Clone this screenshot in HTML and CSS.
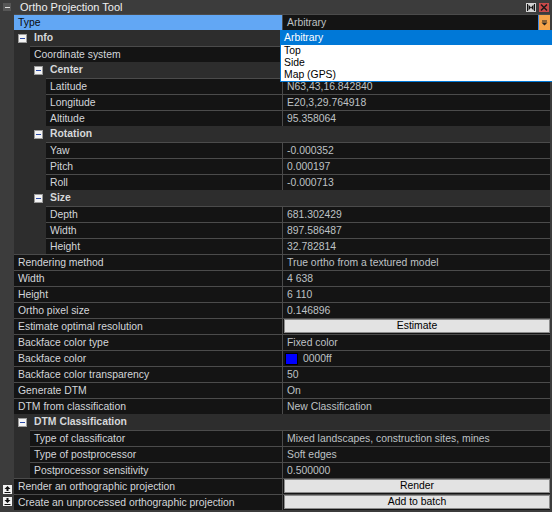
FILE: index.html
```html
<!DOCTYPE html>
<html>

<head>
  <title>Ortho Projection Tool</title>
  <link rel="stylesheet" href="styles.css">
</head>

<body>
  <div class="window">
    <div class="titlebar">
      <span class="tb-collapse"></span>
      <span class="title">Ortho Projection Tool</span>
      <span class="tb-btn tb-float">
        <svg width="10" height="9" viewBox="0 0 10 9"><path d="M1 1h1v7H1zM2.5 1.5L5 4.5 2.5 7.5zM8 1h1v7H8zM7.5 1.5L5 4.5 7.5 7.5z" fill="#111"/></svg>
      </span>
      <span class="tb-btn tb-close">
        <svg width="10" height="9" viewBox="0 0 10 9"><path d="M2 1.5l6 6M8 1.5l-6 6" stroke="#1a1a1a" stroke-width="1.6"/></svg>
      </span>
    </div>

    <div class="panel">
      <div class="gutter">
        <span class="side-icon">
          <svg width="9" height="9" viewBox="0 0 9 9"><rect width="9" height="9" fill="#f2f2f2"/><path d="M4.5 1L1.5 4h2v2h2V4h2zM1.5 7h6v1h-6z" fill="#111"/></svg>
        </span>
        <span class="side-icon">
          <svg width="9" height="9" viewBox="0 0 9 9"><rect width="9" height="9" fill="#f2f2f2"/><path d="M3.5 1h2v2h2l-3 3-3-3h2zM1.5 7h6v1h-6z" fill="#111"/></svg>
        </span>
      </div>

      <div class="grid">
        <div class="row">
          <div class="cell name selected">Type</div>
          <div class="cell value combo">
            <span>Arbitrary</span>
            <span class="combo-arrow">
              <svg width="7" height="6" viewBox="0 0 7 6"><path d="M1 0.5h5v1H1zM0.5 2.5h6L3.5 5.5z" fill="#222"/></svg>
            </span>
          </div>
        </div>

        <div class="row cat"><span class="toggle"></span>Info</div>
        <div class="row l1">
          <div class="cell name">Coordinate system</div>
          <div class="cell value"></div>
        </div>
        <div class="row cat l1"><span class="toggle"></span>Center</div>
        <div class="row l2">
          <div class="cell name">Latitude</div>
          <div class="cell value">N63,43,16.842840</div>
        </div>
        <div class="row l2">
          <div class="cell name">Longitude</div>
          <div class="cell value">E20,3,29.764918</div>
        </div>
        <div class="row l2">
          <div class="cell name">Altitude</div>
          <div class="cell value">95.358064</div>
        </div>
        <div class="row cat l1"><span class="toggle"></span>Rotation</div>
        <div class="row l2">
          <div class="cell name">Yaw</div>
          <div class="cell value">-0.000352</div>
        </div>
        <div class="row l2">
          <div class="cell name">Pitch</div>
          <div class="cell value">0.000197</div>
        </div>
        <div class="row l2">
          <div class="cell name">Roll</div>
          <div class="cell value">-0.000713</div>
        </div>
        <div class="row cat l1"><span class="toggle"></span>Size</div>
        <div class="row l2">
          <div class="cell name">Depth</div>
          <div class="cell value">681.302429</div>
        </div>
        <div class="row l2">
          <div class="cell name">Width</div>
          <div class="cell value">897.586487</div>
        </div>
        <div class="row l2">
          <div class="cell name">Height</div>
          <div class="cell value">32.782814</div>
        </div>

        <div class="row">
          <div class="cell name">Rendering method</div>
          <div class="cell value">True ortho from a textured model</div>
        </div>
        <div class="row">
          <div class="cell name">Width</div>
          <div class="cell value">4 638</div>
        </div>
        <div class="row">
          <div class="cell name">Height</div>
          <div class="cell value">6 110</div>
        </div>
        <div class="row">
          <div class="cell name">Ortho pixel size</div>
          <div class="cell value">0.146896</div>
        </div>
        <div class="row">
          <div class="cell name">Estimate optimal resolution</div>
          <div class="cell value action"><button>Estimate</button></div>
        </div>
        <div class="row">
          <div class="cell name">Backface color type</div>
          <div class="cell value">Fixed color</div>
        </div>
        <div class="row">
          <div class="cell name">Backface color</div>
          <div class="cell value color"><span class="swatch"></span>0000ff</div>
        </div>
        <div class="row">
          <div class="cell name">Backface color transparency</div>
          <div class="cell value">50</div>
        </div>
        <div class="row">
          <div class="cell name">Generate DTM</div>
          <div class="cell value">On</div>
        </div>
        <div class="row">
          <div class="cell name">DTM from classification</div>
          <div class="cell value">New Classification</div>
        </div>

        <div class="row cat"><span class="toggle"></span>DTM Classification</div>
        <div class="row l1">
          <div class="cell name">Type of classificator</div>
          <div class="cell value">Mixed landscapes, construction sites, mines</div>
        </div>
        <div class="row l1">
          <div class="cell name">Type of postprocessor</div>
          <div class="cell value">Soft edges</div>
        </div>
        <div class="row l1">
          <div class="cell name">Postprocessor sensitivity</div>
          <div class="cell value">0.500000</div>
        </div>

        <div class="row">
          <div class="cell name">Render an orthographic projection</div>
          <div class="cell value action"><button>Render</button></div>
        </div>
        <div class="row">
          <div class="cell name">Create an unprocessed orthographic projection</div>
          <div class="cell value action"><button>Add to batch</button></div>
        </div>
      </div>
    </div>

    <ul class="dropdown">
      <li class="active">Arbitrary</li>
      <li>Top</li>
      <li>Side</li>
      <li>Map (GPS)</li>
    </ul>
  </div>
</body>

</html>
```

FILE: styles.css
```css
body {
  margin: 0;
  background-color: #3c3c3c;
  font-family: "Liberation Sans", Arial, sans-serif;
  font-size: 10.4px;
}

.window {
  position: relative;
  width: 552px;
  height: 512px;
  background-color: #3c3c3c;
  overflow: hidden;
}

/* title bar */

.titlebar {
  display: flex;
  align-items: center;
  height: 14px;
}

.tb-collapse {
  position: relative;
  width: 8px;
  height: 8px;
  margin-left: 3px;
  background-color: #575757;
}

.tb-collapse::after {
  content: '';
  position: absolute;
  left: 2px;
  top: 4px;
  width: 5px;
  height: 1px;
  background-color: #e0e0e0;
}

.title {
  flex: 1;
  margin-left: 9px;
  color: #f0f0f0;
  font-size: 11px;
  line-height: 14px;
}

.tb-btn {
  display: flex;
  width: 10px;
  height: 9px;
  margin-top: 1px;
}

.tb-float {
  background-color: #d2d2d2;
  margin-right: 3px;
}

.tb-close {
  background-color: #c94a4a;
  margin-right: 3px;
}

/* main area */

.panel {
  display: flex;
}

.gutter {
  display: flex;
  flex-direction: column;
  justify-content: flex-end;
  gap: 3px;
  width: 14px;
  padding-bottom: 4px;
  box-sizing: border-box;
}

.side-icon {
  display: flex;
  margin-left: 3px;
}

.grid {
  width: 536px;
}

.row {
  display: flex;
  height: 16px;
  background-color: #2d2d2d;
  line-height: 15px;
}

.cell {
  box-sizing: border-box;
  border-top: 1px solid #4b4b4b;
  background-color: #141414;
  padding-left: 4px;
  white-space: nowrap;
  overflow: hidden;
}

.name {
  width: 268px;
  color: #d3d6da;
}

.l1 .name {
  margin-left: 16px;
  width: 252px;
}

.l2 .name {
  margin-left: 32px;
  width: 236px;
}

.value {
  flex: 1;
  border-left: 1px solid #4b4b4b;
  color: #bfc2c5;
}

.name.selected {
  background-color: #62a7f4;
  color: #0a0a0a;
}

/* categories */

.cat {
  align-items: center;
  padding-left: 4px;
  line-height: 16px;
  font-weight: bold;
  color: #d6d8da;
}

.cat.l1 {
  padding-left: 20px;
}

.toggle {
  position: relative;
  width: 9px;
  height: 9px;
  box-sizing: border-box;
  margin-right: 7px;
  border: 1px solid #9c9c9c;
  background-color: #f4f4f4;
}

.toggle::after {
  content: '';
  position: absolute;
  left: 1px;
  top: 3px;
  width: 5px;
  height: 1px;
  background-color: #2a4aa8;
}

/* value editors */

.combo {
  display: flex;
  padding-right: 0;
}

.combo span:first-child {
  flex: 1;
}

.combo-arrow {
  display: flex;
  align-items: center;
  justify-content: center;
  width: 11px;
  border-left: 1px solid #3c8ae8;
  background-color: #f5a44a;
}

.action {
  padding: 0 0 0 1px;
}

.action button {
  display: block;
  width: 100%;
  height: 14px;
  margin: 0;
  padding: 0;
  border: 1px solid #8c8c8c;
  background-color: #e3e3e3;
  color: #000;
  font-family: "Liberation Sans", Arial, sans-serif;
  font-size: 10.4px;
  line-height: 12px;
}

.color {
  display: flex;
  align-items: center;
  padding-left: 2px;
}

.swatch {
  width: 13px;
  height: 12px;
  box-sizing: border-box;
  margin-right: 5px;
  border: 1px solid #000;
  background-color: #0000ff;
}

/* open combo list */

.dropdown {
  position: absolute;
  left: 280px;
  top: 30px;
  width: 271px;
  margin: 0;
  padding: 0;
  list-style: none;
  border: 1px solid #0078d7;
  background-color: #fff;
  color: #000;
}

.dropdown li {
  height: 12px;
  padding-left: 3px;
  line-height: 12px;
}

.dropdown li.active {
  height: 14px;
  line-height: 14px;
  background-color: #0078d7;
  color: #fff;
}
```
